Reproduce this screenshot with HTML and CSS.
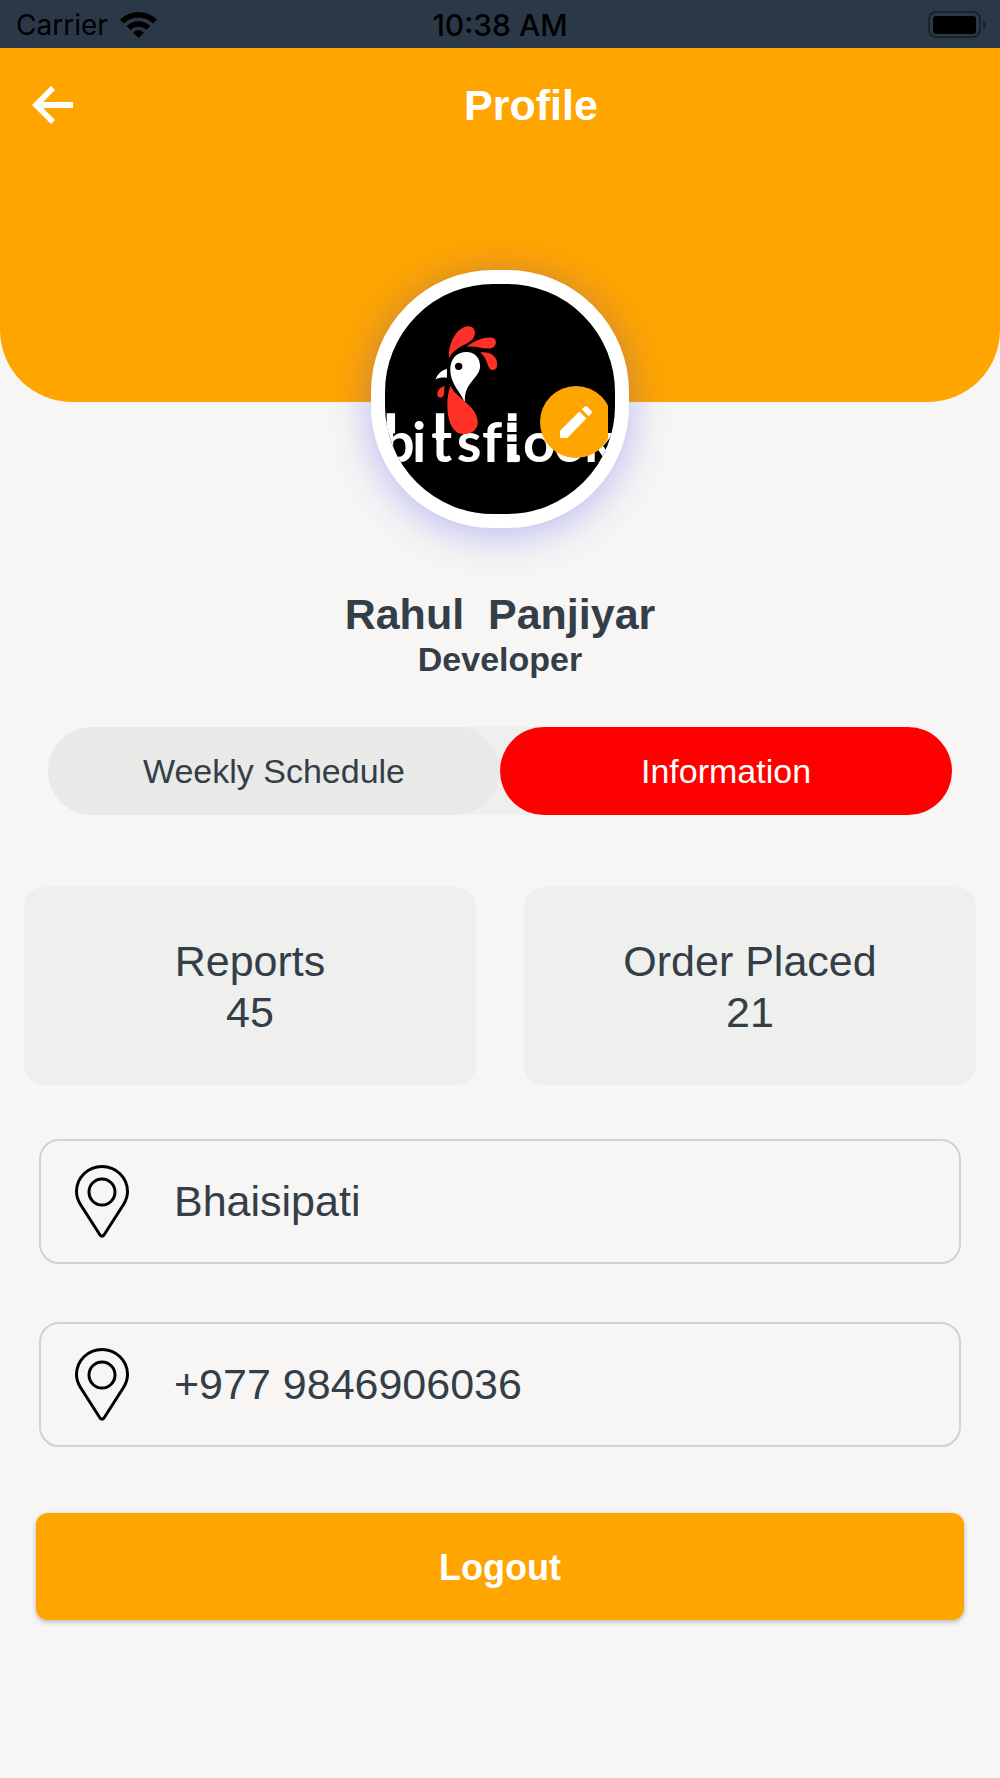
FILE: index.html
```html
<!DOCTYPE html>
<html lang="en">
<head>
<meta charset="utf-8">
<meta name="viewport" content="width=device-width, initial-scale=1">
<title>Profile</title>
<link rel="stylesheet" href="styles.css">
</head>
<body>
<div class="status-bar">
  <div class="status-left">
    <span>Carrier</span>
    <svg class="wifi" viewBox="0 0 37 29" aria-hidden="true">
      <path d="M0 8.6 A26.5 26.5 0 0 1 37 8.6 L33.2 12.4 A21 21 0 0 0 3.8 12.4 Z"/>
      <path d="M6.6 15 A17 17 0 0 1 30.4 15 L26.4 19 A11.5 11.5 0 0 0 10.6 19 Z"/>
      <path d="M13 21.4 A8 8 0 0 1 24 21.4 L18.5 27 Z"/>
    </svg>
  </div>
  <span class="status-time">10:38 AM</span>
  <svg class="battery" viewBox="0 0 60 28" aria-hidden="true">
    <rect x="1" y="1" width="51" height="25" rx="7" fill="none" stroke="#1a222c" stroke-width="2"/>
    <rect x="5" y="5" width="43" height="18" rx="3"/>
    <path d="M55 9 Q58 11 58 14 Q58 17 55 19 Z" fill="#1a222c"/>
  </svg>
</div>

<header class="header">
  <button class="back" type="button" aria-label="Back">
    <svg viewBox="0 0 46 38" aria-hidden="true"><path d="M0 19 L19 0 L23 4 L11 16 H41 V22 H11 L23 34 L19 38 Z"/></svg>
  </button>
  <h1 class="title">Profile</h1>
</header>

<main class="content">
  <div class="avatar">
    <svg class="logo" viewBox="108 102 687 687" role="img" aria-label="bitsflock logo">
      <g fill="#ff3126">
        <path d="M299 323 C296 276 324 229 357 228 C373 228 378 239 376 254 C369 284 322 281 299 323 Z"/>
        <path d="M351 290 C374 270 406 261 424 262 C436 263 440 270 439 278 C437 291 426 295 415 295 C394 295 377 286 351 290 Z"/>
        <path d="M392 307 C422 302 444 319 443 342 C443 354 438 359 430 359 C411 357 417 322 392 307 Z"/>
        <path d="M287 407 C268 411 262 427 265 436 C268 444 279 443 283 434 C287 424 282 418 287 407 Z"/>
      </g>
      <path fill="#fff" d="M348 461 C340 430 303 405 303 357 C303 324 324 305 351 305 C376 305 392 323 392 347 C392 385 338 398 348 461 Z"/>
      <circle cx="328" cy="348" r="11"/>
      <path fill="#fff" d="M293 356 C278 358 265 371 259 387 C269 382 280 381 293 382 Z"/>
      <text class="logo-text" x="101 189 246 322 398 463 520 613 703" y="634">bitsflock</text>
      <!-- tall stems on b, t and l, the foot of the l and the two cuts through it -->
      <g fill="#fff">
        <rect x="113" y="488" width="25" height="60"/>
        <rect x="260" y="488" width="25" height="80"/>
        <rect x="475" y="488" width="26" height="146"/>
        <rect x="484" y="612" width="27" height="22" rx="6"/>
      </g>
      <g>
        <rect x="470" y="511" width="36" height="5"/>
        <rect x="470" y="544" width="36" height="7"/>
        <rect x="470" y="573" width="36" height="7"/>
      </g>
      <path fill="#ff3126" d="M304 405 C316 442 385 464 385 515 C385 538 368 550 343 550 C296 549 292 478 295 443 C297 425 301 415 304 405 Z"/>
    </svg>
    <button class="edit" type="button" aria-label="Edit photo">
      <svg viewBox="0 0 97 97" aria-hidden="true"><path d="M0 75 L59 17 L80 38 L22 97 H0 Z M66 10 L73 3 Q78 -2 83 3 L94 14 Q99 19 94 24 L87 31 Z"/></svg>
    </button>
  </div>

  <h2 class="name">Rahul&nbsp; Panjiyar</h2>
  <p class="role">Developer</p>

  <div class="tabs" role="tablist">
    <button class="tab" type="button" role="tab" aria-selected="false">Weekly Schedule</button>
    <button class="tab tab-active" type="button" role="tab" aria-selected="true">Information</button>
  </div>

  <div class="stats">
    <div class="stat"><span>Reports</span><span>45</span></div>
    <div class="stat"><span>Order Placed</span><span>21</span></div>
  </div>

  <div class="details">
    <div class="detail">
      <svg class="pin" viewBox="0 0 54 73" aria-hidden="true"><path d="M27 1.5 C13 1.5 1.5 12.5 1.5 26.5 C1.5 31 3 35.5 5.5 39.5 L25 70 Q27 72.5 29 70 L48.5 39.5 C51 35.5 52.5 31 52.5 26.5 C52.5 12.5 41 1.5 27 1.5 Z"/><circle cx="27" cy="27" r="13"/></svg>
      <span>Bhaisipati</span>
    </div>
    <div class="detail">
      <svg class="pin" viewBox="0 0 54 73" aria-hidden="true"><path d="M27 1.5 C13 1.5 1.5 12.5 1.5 26.5 C1.5 31 3 35.5 5.5 39.5 L25 70 Q27 72.5 29 70 L48.5 39.5 C51 35.5 52.5 31 52.5 26.5 C52.5 12.5 41 1.5 27 1.5 Z"/><circle cx="27" cy="27" r="13"/></svg>
      <span>+977 9846906036</span>
    </div>
  </div>

  <button class="logout" type="button">Logout</button>
</main>
</body>
</html>
```
FILE: styles.css
```css
* {
  box-sizing: border-box;
}

body {
  margin: 0;
  background: #f7f6f4;
  color: #333e49;
  font-family: "Liberation Sans", Arial, sans-serif;
  font-size: 43px;
  line-height: 51px;
}

button {
  margin: 0;
  padding: 0;
  border: 0;
  background: none;
  color: inherit;
  font: inherit;
  cursor: pointer;
}

svg {
  display: block;
}

.status-bar {
  display: grid;
  grid-template-columns: 1fr auto 1fr;
  align-items: center;
  height: 48px;
  padding: 2px 12px 0;
  background: #2b3848;
  color: #000;
  font-family: Inter, sans-serif;
  font-size: 28px;
  line-height: 46px;
}

.status-left {
  display: flex;
  align-items: center;
  gap: 12px;
  padding-left: 4px;
}

.wifi {
  width: 37px;
  height: 29px;
}

.status-time {
  font-size: 30px;
  font-weight: 500;
}

.battery {
  justify-self: end;
  width: 60px;
  height: 28px;
}

.header {
  display: flex;
  align-items: flex-start;
  min-height: 354px;
  padding: 32px 24px;
  border-radius: 0 0 72px 72px;
  background: #ffa500;
  color: #fff;
}

.back {
  display: flex;
  align-items: center;
  width: 62px;
  height: 50px;
  padding-left: 8px;
}

.back svg {
  width: 46px;
  height: 38px;
  fill: #fff;
}

.title {
  flex: 1;
  margin: 0;
  font-size: 43px;
  text-align: center;
}

.content {
  display: flex;
  flex-direction: column;
}

.avatar {
  position: relative;
  align-self: center;
  width: 258px;
  height: 258px;
  margin-top: -132px;
  border: 14px solid #fff;
  border-radius: 122px;
  background: #000;
  box-shadow: 0 6px 40px rgba(50, 50, 240, 0.32);
}

.logo {
  width: 100%;
  height: 100%;
  border-radius: 108px;
  overflow: hidden;
}

.logo-text {
  fill: #fff;
  font-family: Lato, sans-serif;
  font-size: 168px;
  font-weight: 700;
}

.edit {
  position: absolute;
  top: 102px;
  right: 3px;
  display: grid;
  place-items: center;
  width: 72px;
  height: 72px;
  border-radius: 50%;
  background: #ffa500;
  clip-path: inset(0 4px 0 0);
}

.edit svg {
  width: 32px;
  height: 32px;
  fill: #fff;
}

.name {
  margin: 61px 0 0;
  font-size: 43px;
  text-align: center;
}

.role {
  margin: 0;
  font-size: 34px;
  font-weight: 700;
  line-height: 39px;
  text-align: center;
}

.tabs {
  display: grid;
  grid-template-columns: 1fr 1fr;
  margin: 48px 48px 0;
  border-radius: 44px;
  background: #efefed;
}

.tab {
  height: 88px;
  border-radius: 44px;
  background: #e9e9e7;
  font-size: 34px;
}

.tab-active {
  background: #f00;
  color: #fff;
}

.stats {
  display: grid;
  grid-template-columns: 1fr 1fr;
  gap: 48px;
  margin: 72px 24px 0;
}

.stat {
  display: flex;
  flex-direction: column;
  align-items: center;
  padding: 49px 24px 47px;
  border-radius: 20px;
  background: #efefed;
}

.details {
  display: grid;
  gap: 58px;
  margin: 54px 39px 0;
}

.detail {
  display: flex;
  align-items: center;
  gap: 45px;
  padding: 24px 34px;
  border: 2px solid #d2d2d0;
  border-radius: 20px;
}

.pin {
  width: 54px;
  height: 73px;
  fill: none;
  stroke: #000;
  stroke-width: 3;
}

.logout {
  height: 107px;
  margin: 66px 36px;
  padding-top: 2px;
  border-radius: 12px;
  background: #ffa500;
  box-shadow: 0 2px 5px rgba(0, 0, 0, 0.25);
  color: #fff;
  font-size: 36px;
  font-weight: 700;
}
```
